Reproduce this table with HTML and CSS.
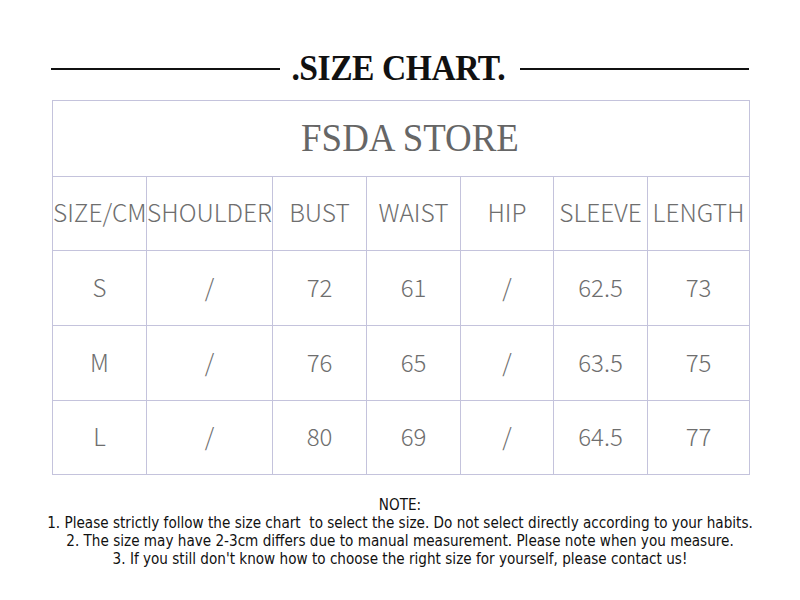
FILE: index.html
```html
<!DOCTYPE html>
<html>
<head>
<meta charset="utf-8">
<link rel="stylesheet" href="styles.css">
</head>
<body>
<div class="page">
  <div class="heading">
    <span class="rule"></span>
    <h1 class="title">.SIZE CHART.</h1>
    <span class="rule"></span>
  </div>
  <table class="chart">
    <colgroup>
      <col class="c1"><col class="c2"><col class="c3"><col class="c4"><col class="c5"><col class="c6"><col class="c7">
    </colgroup>
    <tr class="store-row"><td colspan="7" class="store"><span class="store-text">FSDA STORE</span></td></tr>
    <tr class="head-row">
      <td>SIZE/CM</td><td>SHOULDER</td><td>BUST</td><td>WAIST</td><td>HIP</td><td>SLEEVE</td><td>LENGTH</td>
    </tr>
    <tr class="row"><td>S</td><td>/</td><td>72</td><td>61</td><td>/</td><td>62.5</td><td>73</td></tr>
    <tr class="row"><td>M</td><td>/</td><td>76</td><td>65</td><td>/</td><td>63.5</td><td>75</td></tr>
    <tr class="row"><td>L</td><td>/</td><td>80</td><td>69</td><td>/</td><td>64.5</td><td>77</td></tr>
  </table>
  <div class="notes">
    <p>NOTE:</p>
    <p>1. Please strictly follow the size chart&nbsp; to select the size. Do not select directly according to your habits.</p>
    <p>2. The size may have 2-3cm differs due to manual measurement. Please note when you measure.</p>
    <p>3. If you still don't know how to choose the right size for yourself, please contact us!</p>
  </div>
</div>
</body>
</html>
```

FILE: styles.css
```css
html, body {
  margin: 0;
  padding: 0;
  background: #ffffff;
}
.page {
  width: 800px;
  height: 600px;
  padding-top: 50px;
  box-sizing: border-box;
  overflow: hidden;
}
.heading {
  display: flex;
  align-items: center;
  justify-content: space-between;
  margin: 0 51px 0 51px;
  height: 38px;
}
.rule {
  display: block;
  height: 2px;
  background: #111;
  flex: 0 0 229px;
}
.title {
  margin: 0 4px 0 0;
  font-family: "Liberation Serif", serif;
  font-weight: bold;
  font-size: 35px;
  line-height: 38px;
  color: #111;
  letter-spacing: -0.5px;
  white-space: nowrap;
  transform: scaleX(0.96);
}
.chart {
  margin: 12px 0 0 52px;
  border-collapse: collapse;
  table-layout: fixed;
  width: 697px;
  font-family: "Noto Sans CJK SC", "Noto Sans", sans-serif;
  font-weight: 200;
  color: #6e6e6e;
}
.c1 { width: 94px; }
.c2 { width: 126px; }
.c3 { width: 94px; }
.c4 { width: 94px; }
.c5 { width: 93px; }
.c6 { width: 94px; }
.c7 { width: 102px; }
.chart td {
  border: 1.5px solid #c4c3dc;
  text-align: center;
  padding: 0 0 4px 0;
  white-space: nowrap;
  overflow: hidden;
}
.store {
  height: 71px;
  font-family: "Liberation Serif", serif;
  font-weight: normal;
  font-size: 41px;
  color: #666666;
}
.store-text {
  display: inline-block;
  transform: translateX(9px) scaleX(0.9);
}
.head-row td {
  height: 69px;
  font-size: 24.5px;
  letter-spacing: 0;
}
.row td {
  height: 70px;
  font-size: 24px;
}
.row:last-child td {
  height: 69px;
}
.notes {
  margin-top: 21px;
  text-align: center;
  font-family: "Liberation Sans Narrow", "DejaVu Sans Condensed", sans-serif;
  font-size: 15.5px;
  line-height: 18px;
  color: #111;
  transform: scaleX(0.975);
}
.notes p {
  margin: 0;
  white-space: nowrap;
}
```
